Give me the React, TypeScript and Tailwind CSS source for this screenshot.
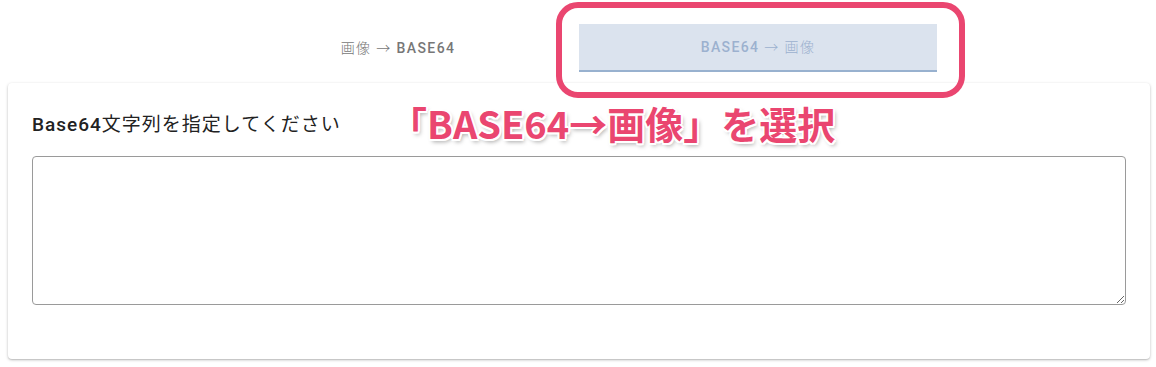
import React from "react";

export default function App() {
  const jp = { fontFamily: 'Roboto, "Noto Sans CJK JP", sans-serif' };
  return (
    <div className="relative w-[1156px] h-[367px] bg-white overflow-hidden" style={jp}>
      <div className="flex justify-center pt-[24px]">
        <div className="w-[358px] h-[48px] flex items-center justify-center text-[14px] font-medium tracking-[0.1em] text-[#777]">
          <span className="font-light">画像 →</span>&nbsp;BASE64
        </div>
        <div className="w-[358px] h-[48px] ml-[2px] flex items-center justify-center text-[14px] font-medium tracking-[0.1em] text-[#9cb1cf] bg-[#dbe3ee] border-b-2 border-[#98b1cf]">
          BASE64&nbsp;<span className="font-light">→ 画像</span>
        </div>
      </div>
      <div className="ml-[8px] w-[1142px] mt-[11px] h-[276px] rounded-[4px] bg-white shadow-[0_1px_3px_rgba(0,0,0,0.25),0_1px_1px_rgba(0,0,0,0.08)] px-[24px] pt-[28px]">
        <div className="text-[19px] text-[#222] leading-[27px] tracking-[1px]">
          <span className="font-medium">Base64</span>文字列を指定してください
        </div>
        <textarea className="mt-[18px] block w-full h-[149px] border border-[#9a9a9a] rounded-[4px] bg-white outline-none resize-y" />
      </div>
      <div className="absolute left-[556px] top-[2px] w-[409px] h-[96px] border-[6px] border-[#ea4670] rounded-[22px]" />
      <div
        className="absolute left-[389px] top-[98px] text-[38px] font-bold leading-[50px] text-[#ea4670] whitespace-nowrap"
        style={{
          fontFamily: '"Noto Sans CJK JP", sans-serif',
          textShadow:
            "2px 0 0 #fff, -2px 0 0 #fff, 0 2px 0 #fff, 0 -2px 0 #fff, 1.5px 1.5px 0 #fff, -1.5px -1.5px 0 #fff, 1.5px -1.5px 0 #fff, -1.5px 1.5px 0 #fff, 2px 3px 4px rgba(0,0,0,0.35)",
        }}
      >
        「BASE64→画像」を選択
      </div>
    </div>
  );
}
